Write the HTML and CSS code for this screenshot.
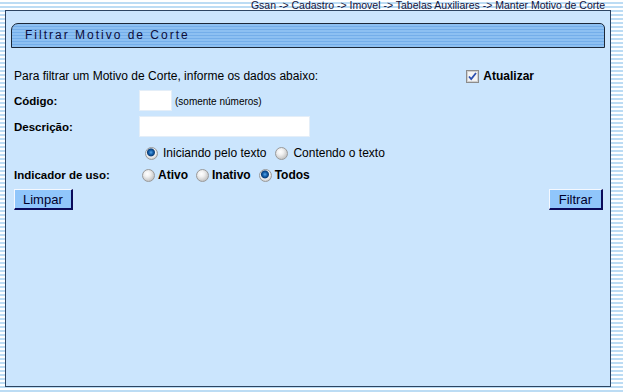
FILE: index.html
```html
<html>
  <head>
    <title>Filtrar Motivo de Corte</title>
    <meta charset="UTF-8">
    <link rel="stylesheet" href="styles.css">
  </head>
  <body>
    <div class="crumbs">Gsan -&gt; Cadastro -&gt; Imovel -&gt; Tabelas Auxiliares -&gt; Manter Motivo de Corte</div>
    <div class="panel">
      <div class="title">Filtrar Motivo de Corte</div>
      <form class="filter">
        <div class="row intro">
          <span>Para filtrar um Motivo de Corte, informe os dados abaixo:</span>
          <label class="refresh">
            <svg class="check" width="13" height="13" viewBox="0 0 13 13">
              <rect x="0.5" y="0.5" width="12" height="12" fill="#e6e6e6" stroke="#8c8c8c"/>
              <rect x="1.5" y="1.5" width="10" height="10" fill="#f4f4f4" stroke="#d0d0d0"/>
              <path d="M3 6.5 L5.2 9 L10 3" fill="none" stroke="#2a4fb0" stroke-width="1.8"/>
            </svg>
            Atualizar
          </label>
        </div>
        <div class="row field">
          <span class="label">Código:</span>
          <input class="box short" type="text">
          <span class="hint">(somente números)</span>
        </div>
        <div class="row field">
          <span class="label">Descrição:</span>
          <input class="box long" type="text">
        </div>
        <div class="row options">
          <span class="label"></span>
          <label><input type="radio" name="modo" checked> Iniciando pelo texto</label>
          <label><input type="radio" name="modo"> Contendo o texto</label>
        </div>
        <div class="row options usage">
          <span class="label">Indicador de uso:</span>
          <label><input type="radio" name="uso">Ativo</label>
          <label><input type="radio" name="uso">Inativo</label>
          <label><input type="radio" name="uso" checked>Todos</label>
        </div>
        <div class="row buttons">
          <button type="button" class="btn">Limpar</button>
          <button type="button" class="btn wide">Filtrar</button>
        </div>
      </form>
    </div>
  </body>
</html>
```

FILE: styles.css
```css
body {
  margin: 0;
  overflow: hidden;
  font-family: "Liberation Sans", Arial, sans-serif;
  font-size: 12px;
  color: #000;
  background: repeating-linear-gradient(#ffffff 0 2px, #bcdcf4 2px 4px);
}
.crumbs {
  height: 10px;
  line-height: 10px;
  font-size: 10.5px;
  text-align: right;
  padding-right: 18px;
  color: #14143c;
  white-space: nowrap;
}
.panel {
  margin-left: 5px;
  width: 604px;
  height: 375px;
  border: 1px solid #2c4462;
  background: #cbe5fd;
}
.title {
  margin: 12px 5px 0 5px;
  height: 23px;
  line-height: 23px;
  padding-left: 13px;
  border: 1px solid #1c2838;
  border-radius: 7px 5px 0 0;
  background: repeating-linear-gradient(#8dc0f2 0 2px, #74aeea 2px 3px);
  color: #0c0c3a;
  font-size: 12px;
  letter-spacing: 2px;
}
.filter {
  padding: 18px 7px 0 8px;
}
.row {
  display: flex;
  align-items: center;
}
.intro {
  height: 20px;
  justify-content: space-between;
  padding-right: 69px;
}
.refresh {
  display: flex;
  align-items: center;
  gap: 4px;
  font-weight: bold;
}
.field {
  height: 21px;
  margin-top: 4px;
}
.field + .field {
  margin-top: 5px;
}
.label {
  width: 125px;
  flex: none;
  font-size: 11.5px;
  font-weight: bold;
}
.box {
  height: 21px;
  box-sizing: border-box;
  border: 1px solid #e4eef8;
  background: #fff;
  margin: 0;
}
.short {
  width: 33px;
}
.long {
  width: 171px;
}
.hint {
  font-size: 10px;
  margin-left: 3px;
  margin-top: 2px;
}
.options {
  height: 16px;
  margin-top: 8px;
}
.options label {
  display: flex;
  align-items: center;
  margin-right: 3px;
}
.usage {
  margin-top: 6px;
}
.usage label {
  font-weight: bold;
  margin-right: 8px;
}
.usage .label {
  width: 128px;
}
input[type="radio"] {
  appearance: none;
  -webkit-appearance: none;
  width: 13px;
  height: 13px;
  margin: 0 3px 0 0;
  border: 1px solid #9a9a9a;
  border-radius: 50%;
  background: radial-gradient(circle at 40% 35%, #ffffff 0, #f0f0f0 3px, #c8c8c8 7px);
}
.options:not(.usage) input[type="radio"] {
  margin: 0 5px 0 6px;
}
input[type="radio"]:checked {
  background: radial-gradient(circle at 45% 40%, #5aa7e8 0, #1663b0 2px, #0b3f7a 3.5px, #f2f2f2 4.5px, #c8c8c8 7px);
}
.buttons {
  margin-top: 6px;
  justify-content: space-between;
}
.btn {
  height: 21px;
  padding: 0 8px;
  font-family: "Liberation Sans", Arial, sans-serif;
  font-size: 13px;
  color: #00002a;
  background: #90c6fb;
  border-top: 1px solid #f4f8ff;
  border-left: 1px solid #f4f8ff;
  border-right: 2px solid #0a0a5a;
  border-bottom: 2px solid #0a0a5a;
}
.btn.wide {
  padding: 0 9px;
}
```
